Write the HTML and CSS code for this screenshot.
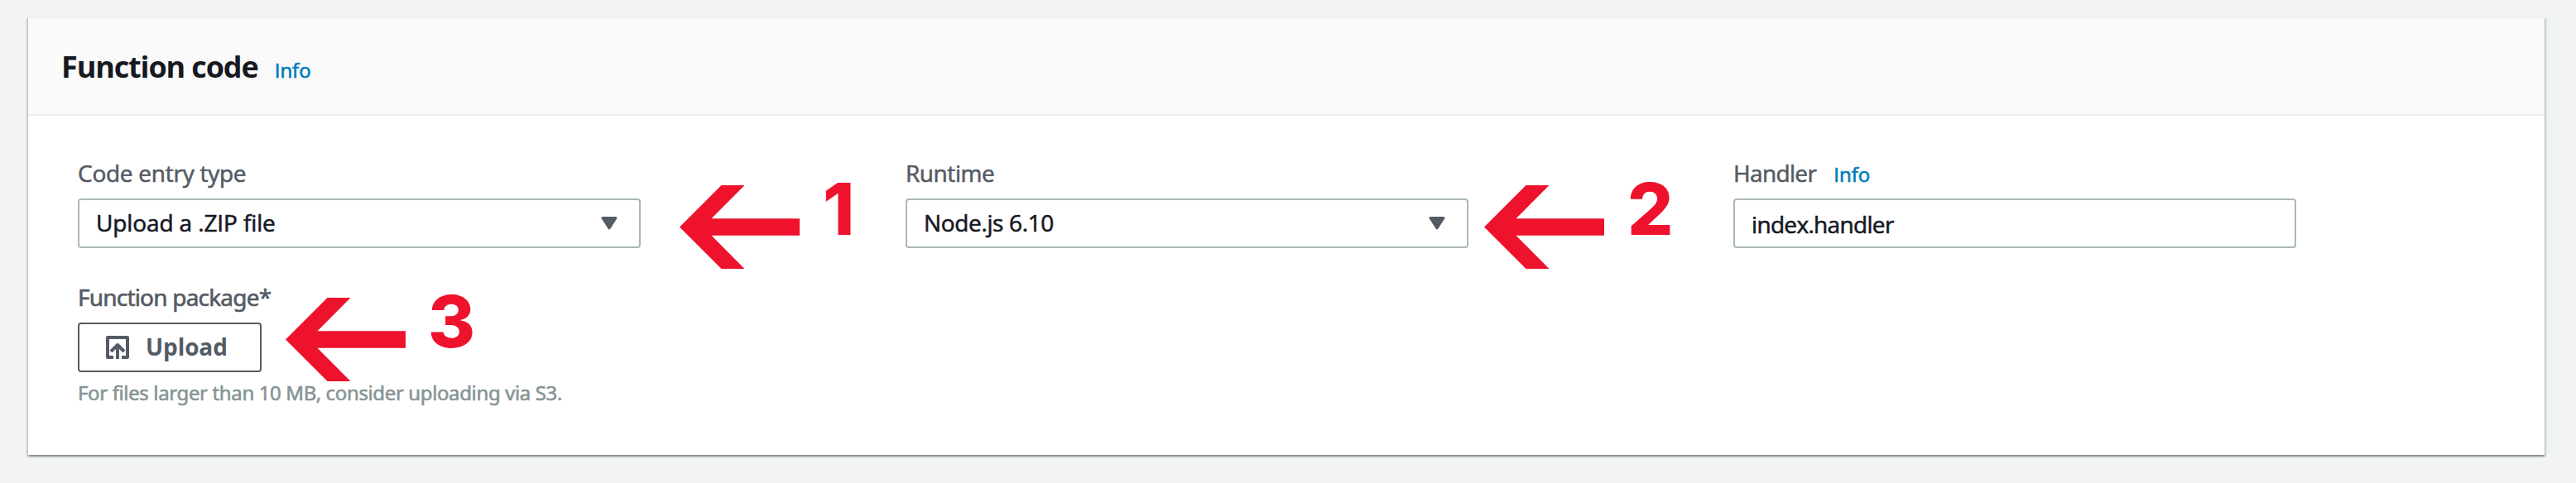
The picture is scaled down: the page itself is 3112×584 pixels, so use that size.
FILE: index.html
```
<!DOCTYPE html>
<html lang="en">
<head>
<meta charset="utf-8">
<title>Function code</title>
<link rel="stylesheet" href="styles.css">
</head>
<body>
<main class="card">
  <header class="card-header">
    <h2 class="title">Function code</h2>
    <a class="info">Info</a>
  </header>
  <section class="card-body">
    <div class="row">
      <div class="field">
        <div class="label code-entry">Code entry type</div>
        <div class="control select"><span class="zip">Upload a .ZIP file</span><svg class="caret" viewBox="0 0 20 16"><path d="M2 1.5H18L10 14Z"/></svg></div>
      </div>
      <div class="field">
        <div class="label runtime">Runtime</div>
        <div class="control select"><span class="node">Node.js 6.10</span><svg class="caret" viewBox="0 0 20 16"><path d="M2 1.5H18L10 14Z"/></svg></div>
      </div>
      <div class="field">
        <div class="label handler"><span>Handler</span><a class="info">Info</a></div>
        <div class="control input">index.handler</div>
      </div>
    </div>
    <div class="package">
      <div class="label package-label">Function package*</div>
      <button class="upload"><svg class="upload-icon" viewBox="0 0 28 28"><path d="M9 26H2V2H26V26H19M14 28V11M6 19L14 11L22 19"/></svg><span>Upload</span></button>
      <p class="hint">For files larger than 10 MB, consider uploading via S3.</p>
    </div>
  </section>
</main>
<div class="mark mark-1"><svg class="arrow" viewBox="0 0 145 101"><path d="M0 50.500L50.500 0H78.500L38.500 40.300H145V60.700H38.500L78.500 101H50.500Z"/></svg><b class="digit">1</b></div>
<div class="mark mark-2"><svg class="arrow" viewBox="0 0 145 101"><path d="M0 50.500L50.500 0H78.500L38.500 40.300H145V60.700H38.500L78.500 101H50.500Z"/></svg><b class="digit">2</b></div>
<div class="mark mark-3"><svg class="arrow" viewBox="0 0 145 101"><path d="M0 50.500L50.500 0H78.500L38.500 40.300H145V60.700H38.500L78.500 101H50.500Z"/></svg><b class="digit">3</b></div>
</body>
</html>
```
FILE: styles.css
```
* { box-sizing: border-box; }
body {
  margin: 0;
  height: 584px;
  padding: 20px 38px 0 34px;
  background: #f2f4f4;
  font-family: "Open Sans", "Noto Sans", sans-serif;
  font-size: 28px;
  color: #16191f;
  overflow: hidden;
}
.card {
  height: 530px;
  background: #fff;
  border-top: 2px solid #eaeded;
  box-shadow: 0 2px 2px 0 rgba(0, 28, 36, .3), 2px 2px 2px 0 rgba(0, 28, 36, .15), -2px 2px 2px 0 rgba(0, 28, 36, .15);
}
.card-header {
  display: flex;
  align-items: baseline;
  gap: 20px;
  height: 118px;
  padding: 35px 40px 0;
  background: #fafafa;
  border-bottom: 2px solid #eaeded;
}
.title {
  margin: 0;
  font-size: 36px;
  font-weight: 700;
  line-height: 48px;
  letter-spacing: -1.13px;
}
.info {
  font-size: 24px;
  line-height: 32px;
  color: #007dbc;
  letter-spacing: 0;
  -webkit-text-stroke: .7px #007dbc;
}
.card-body { padding: 49px 60px 0; }
.row {
  display: grid;
  grid-template-columns: repeat(3, 680px);
  column-gap: 320px;
}
.label {
  height: 40px;
  margin-bottom: 11px;
  line-height: 40px;
  color: #545b64;
  -webkit-text-stroke: .6px #545b64;
}
.code-entry { letter-spacing: -.25px; }
.runtime { letter-spacing: -.43px; }
.handler { display: flex; align-items: baseline; gap: 21px; letter-spacing: -.65px; }
.package-label { font-family: "Noto Sans", sans-serif; letter-spacing: -.8px; }
.control {
  height: 60px;
  padding-left: 20px;
  border: 2px solid #aab7b8;
  border-radius: 4px;
  line-height: 54px;
  -webkit-text-stroke: .6px #16191f;
}
.select {
  display: flex;
  justify-content: space-between;
  padding-right: 26px;
}
.zip { letter-spacing: -.12px; }
.node { letter-spacing: -.35px; }
.input { line-height: 58px; letter-spacing: -.67px; }
.caret {
  width: 20px;
  height: 16px;
  margin-top: 20px;
  fill: #545b64;
  stroke: #545b64;
  stroke-width: 3;
  stroke-linejoin: round;
}
.package { margin-top: 39px; }
.upload {
  display: flex;
  align-items: flex-start;
  gap: 20px;
  width: 222px;
  height: 60px;
  padding: 0 0 0 32px;
  background: #fff;
  border: 2px solid #545b64;
  border-radius: 4px;
  color: #545b64;
  font: 700 28px/54px "Open Sans", sans-serif;
  letter-spacing: -.1px;
}
.upload-icon {
  width: 28px;
  height: 28px;
  margin-top: 14px;
  fill: none;
  stroke: #545b64;
  stroke-width: 4;
  stroke-linejoin: round;
}
.hint {
  margin: 7px 0 0;
  font-family: "Noto Sans", sans-serif;
  font-size: 24px;
  line-height: 36px;
  letter-spacing: -.37px;
  color: #879596;
  -webkit-text-stroke: .6px #879596;
}
/* Step markers drawn over the form */
.mark {
  position: absolute;
  display: flex;
  color: #ee122c;
}
.mark-1 { left: 821px; top: 209px; gap: 28px; }
.mark-2 { left: 1793px; top: 209px; gap: 28px; }
.mark-3 { left: 345px; top: 345px; gap: 27px; }
.arrow {
  width: 145px;
  height: 101px;
  margin-top: 15px;
  fill: currentColor;
}
.digit {
  font: 800 87px/88px Inter, sans-serif;
}
```
